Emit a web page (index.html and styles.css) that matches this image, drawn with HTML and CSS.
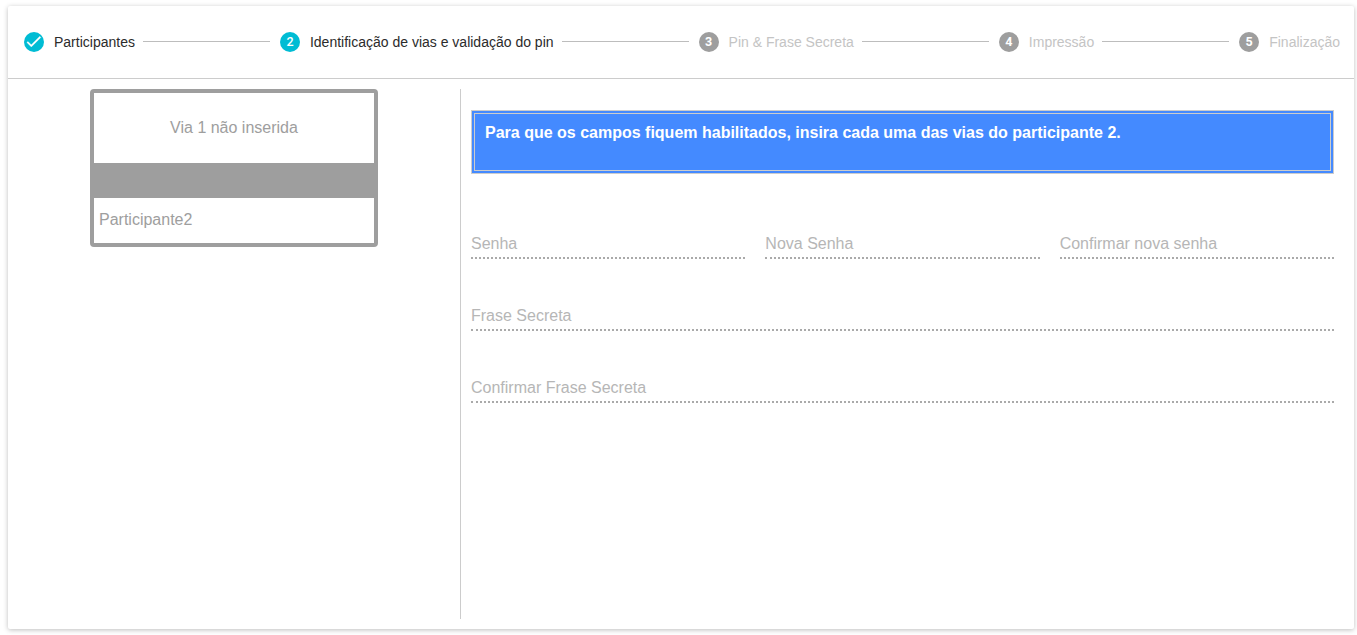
FILE: index.html
```html
<!DOCTYPE html>
<html lang="pt-BR">
<head>
<meta charset="utf-8">
<title>Identificação de vias e validação do pin</title>
<link rel="stylesheet" href="styles.css">
</head>
<body>
<main class="card">
  <header class="steps">
    <div class="step active"><span class="badge"><svg viewBox="0 0 20 20" width="20" height="20"><path transform="translate(.1 -.2) scale(.8)" d="M9 16.17 4.83 12l-1.42 1.41L9 19 21 7l-1.41-1.41z" fill="#fff" stroke="#fff" stroke-width=".3"/></svg></span><span>Participantes</span></div>
    <span class="line"></span>
    <div class="step active"><span class="badge">2</span><span>Identificação de vias e validação do pin</span></div>
    <span class="line"></span>
    <div class="step"><span class="badge">3</span><span>Pin &amp; Frase Secreta</span></div>
    <span class="line"></span>
    <div class="step"><span class="badge">4</span><span>Impressão</span></div>
    <span class="line"></span>
    <div class="step"><span class="badge">5</span><span>Finalização</span></div>
  </header>
  <div class="content">
    <aside class="side">
      <div class="via">
        <div class="via-status">Via 1 não inserida</div>
        <div class="via-name">Participante2</div>
      </div>
    </aside>
    <section class="form">
      <div class="notice">Para que os campos fiquem habilitados, insira cada uma das vias do participante 2.</div>
      <div class="row">
        <div class="field">Senha</div>
        <div class="field">Nova Senha</div>
        <div class="field">Confirmar nova senha</div>
      </div>
      <div class="row"><div class="field">Frase Secreta</div></div>
      <div class="row"><div class="field">Confirmar Frase Secreta</div></div>
    </section>
  </div>
</main>
</body>
</html>
```
FILE: styles.css
```css
* { box-sizing: border-box; }
body {
  margin: 0;
  height: 635px;
  padding: 6px 3px 6px 8px;
  overflow: hidden;
  background: #fff;
  font: 16px/20px "Liberation Sans", Arial, sans-serif;
}
.card {
  height: 623px;
  display: flex;
  flex-direction: column;
  background: #fff;
  border-radius: 2px;
  box-shadow: 0 1px 5px rgba(0, 0, 0, .26);
}
.steps {
  height: 73px;
  flex: none;
  display: flex;
  align-items: center;
  padding: 0 14px 0 16px;
  border-bottom: 1px solid #ccc;
}
.step {
  display: flex;
  align-items: center;
  gap: 10px;
  font-size: 14px;
  white-space: nowrap;
  color: #c4c4c4;
}
.step.active { color: #2b2b2b; }
.badge {
  width: 20px;
  height: 20px;
  border-radius: 50%;
  background: #9e9e9e;
  color: #fff;
  font: bold 12.5px/20px Roboto, sans-serif;
  text-align: center;
}
.active .badge { background: #00bcd4; font-weight: 500; }
.badge svg { display: block; }
.line {
  flex: 1;
  height: 1px;
  margin: 0 10px 1px 8px;
  background: #bdbdbd;
}
.content {
  flex: 1;
  display: flex;
  padding: 10px 20px 10px 0;
}
.side { width: 452px; padding-left: 82px; }
.via {
  width: 288px;
  height: 158px;
  display: flex;
  flex-direction: column;
  justify-content: space-between;
  border: 4px solid #9e9e9e;
  border-radius: 4px;
  background: #9e9e9e;
  color: #9e9e9e;
}
.via-status { height: 70px; line-height: 70px; text-align: center; background: #fff; }
.via-name { height: 45px; line-height: 44px; padding-left: 5px; background: #fff; }
.form { flex: 1; padding: 21px 0 0 10px; border-left: 1px solid #ccc; }
.notice {
  height: 64px;
  margin-bottom: 48px;
  padding: 9px 10px;
  border: 4px double #ccc;
  background: #448aff;
  color: #fff;
  font-weight: bold;
}
.row { display: flex; gap: 20px; height: 37px; margin-bottom: 35px; }
.field {
  flex: 1;
  height: 37px;
  padding-top: 12px;
  border-bottom: 2px dotted #aaa;
  color: #b6b6b6;
}
```
